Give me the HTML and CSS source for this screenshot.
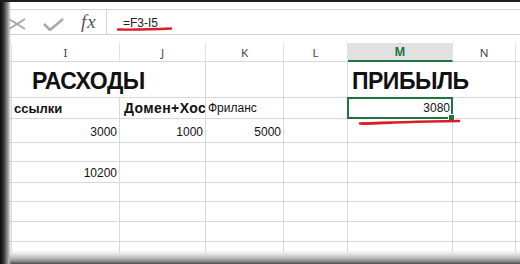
FILE: index.html
```html
<!DOCTYPE html>
<html lang="ru">
<head>
    <meta charset="UTF-8">
    <title>Прибыль</title>
    <link rel="stylesheet" href="styles.css">
</head>
<body>
<div class="screen">
    <div class="formula-bar">
        <div class="fb-icons">
            <svg class="ico-x" width="18" height="12" viewBox="0 0 18 12">
                <path d="M1 1 L17 11 M17 1 L1 11" stroke="#a3a3a3" stroke-width="1.6" fill="none"/>
            </svg>
            <svg class="ico-ok" width="21" height="13" viewBox="0 0 21 13">
                <path d="M1 6 L7 12 L20 1" stroke="#a8a8a8" stroke-width="2.6" fill="none"/>
            </svg>
            <span class="fx">fx</span>
        </div>
        <div class="fb-input">=F3-I5</div>
    </div>

    <div class="sheet">
        <div class="row head">
            <div class="cell"></div>
            <div class="cell">I</div>
            <div class="cell">J</div>
            <div class="cell">K</div>
            <div class="cell">L</div>
            <div class="cell sel-col">M</div>
            <div class="cell">N</div>
            <div class="cell"></div>
        </div>
        <div class="row r1">
            <div class="cell"></div>
            <div class="cell big span2 indent">РАСХОДЫ</div>
            <div class="cell"></div>
            <div class="cell"></div>
            <div class="cell big span2">ПРИБЫЛЬ</div>
            <div class="cell"></div>
        </div>
        <div class="row r2">
            <div class="cell"></div>
            <div class="cell bold">ссылки</div>
            <div class="cell bold wide">Домен+Хостинг</div>
            <div class="cell">Фриланс</div>
            <div class="cell"></div>
            <div class="cell num active">3080</div>
            <div class="cell"></div>
            <div class="cell"></div>
        </div>
        <div class="row r3">
            <div class="cell num">500</div>
            <div class="cell num">3000</div>
            <div class="cell num">1000</div>
            <div class="cell num">5000</div>
            <div class="cell"></div>
            <div class="cell"></div>
            <div class="cell"></div>
            <div class="cell"></div>
        </div>
        <div class="row r4">
            <div class="cell"></div><div class="cell"></div><div class="cell"></div><div class="cell"></div>
            <div class="cell"></div><div class="cell"></div><div class="cell"></div><div class="cell"></div>
        </div>
        <div class="row r5">
            <div class="cell num">4</div>
            <div class="cell num">10200</div>
            <div class="cell"></div><div class="cell"></div><div class="cell"></div>
            <div class="cell"></div><div class="cell"></div><div class="cell"></div>
        </div>
        <div class="row r6">
            <div class="cell"></div><div class="cell"></div><div class="cell"></div><div class="cell"></div>
            <div class="cell"></div><div class="cell"></div><div class="cell"></div><div class="cell"></div>
        </div>
        <div class="row r7">
            <div class="cell"></div><div class="cell"></div><div class="cell"></div><div class="cell"></div>
            <div class="cell"></div><div class="cell"></div><div class="cell"></div><div class="cell"></div>
        </div>
        <div class="row r8">
            <div class="cell"></div><div class="cell"></div><div class="cell"></div><div class="cell"></div>
            <div class="cell"></div><div class="cell"></div><div class="cell"></div><div class="cell"></div>
        </div>
        <div class="row r9">
            <div class="cell"></div><div class="cell"></div><div class="cell"></div><div class="cell"></div>
            <div class="cell"></div><div class="cell"></div><div class="cell"></div><div class="cell"></div>
        </div>
    </div>

    <!-- красные пометки поверх скриншота -->
    <svg class="marks" width="520" height="264" viewBox="0 0 520 264">
        <path d="M118 29.5 Q140 30 171 28.5" stroke="#d81e26" stroke-width="2.4" fill="none" stroke-linecap="round"/>
        <path d="M360 123.5 Q400 122 459 121" stroke="#d81e26" stroke-width="2.6" fill="none" stroke-linecap="round"/>
        <path d="M362 124 L392 123" stroke="#d81e26" stroke-width="2" fill="none" stroke-linecap="round"/>
    </svg>
</div>
</body>
</html>
```

FILE: styles.css
```css
body {
    margin: 0;
    background: #fff;
    font-family: "Liberation Sans", Arial, sans-serif;
}
.screen {
    position: relative;
    width: 520px;
    height: 264px;
    overflow: hidden;
    background: #fff;
    border-top: 2px solid #1e1e1e;
    box-sizing: border-box;
}
.screen::after {
    content: "";
    position: absolute;
    inset: 0;
    pointer-events: none;
    background:
        linear-gradient(to right, #0c0c0c 0, #2a2a2a 3px, #6a6a6a 6px, #b8b8b8 9px, rgba(255,255,255,0) 11px) left top / 11px 100% no-repeat,
        linear-gradient(to bottom, rgba(255,255,255,0) 0, #e4e4e4 4px, #b0b0b0 9px, #7a7a7a 12px, #4a4a4a 14px) left bottom / 100% 14px no-repeat;
}

/* строка формул */
.formula-bar {
    display: flex;
    margin-top: 7px;
    height: 24px;
    border-top: 1px solid #d6d6d6;
    border-bottom: 1px solid #d0d0d0;
}
.fb-icons {
    width: 107px;
    display: flex;
    align-items: center;
    border-right: 1px solid #d6d6d6;
    padding-left: 8px;
    box-sizing: border-box;
}
.ico-x {
    margin-top: 4px;
}
.ico-ok {
    margin-left: 17px;
    margin-top: 4px;
}
.fx {
    margin-left: 17px;
    font-family: "Liberation Serif", serif;
    font-style: italic;
    font-size: 19px;
    color: #555;
    letter-spacing: 1px;
}
.fb-input {
    padding-left: 16px;
    padding-top: 6px;
    font-size: 12px;
    color: #222;
}

/* лист */
.sheet {
    margin-top: 8px;
}
.row {
    display: grid;
    grid-template-columns: 12px 108px 86px 78px 64px 105px 63px 4px;
}
.cell {
    border-right: 1px solid #d9d9d9;
    border-bottom: 1px solid #d9d9d9;
    box-sizing: border-box;
    font-size: 12px;
    color: #111;
    white-space: nowrap;
    overflow: hidden;
    display: flex;
    align-items: flex-end;
    padding: 0 2px 3px 2px;
}
.row .cell:last-child {
    border-right: none;
    padding: 0;
}
.span2 {
    grid-column: span 2;
}
.num {
    justify-content: flex-end;
}
.bold {
    font-weight: bold;
    font-size: 13px;
    padding-bottom: 2px;
}
.wide {
    font-size: 14px;
    letter-spacing: 0.4px;
    padding-left: 4px;
}
.big {
    font-weight: bold;
    font-size: 23px;
    letter-spacing: -0.5px;
    padding-left: 4px;
    padding-bottom: 2px;
    overflow: visible;
}
.indent {
    padding-left: 20px;
}
.head {
    height: 19px;
}
.head .cell {
    justify-content: center;
    align-items: center;
    padding: 0;
    font-family: "Noto Sans", sans-serif;
    font-size: 11.5px;
    color: #444;
    border-right-color: #e2e2e2;
}
.head .sel-col {
    background: #e1e1e1;
    color: #217346;
    font-weight: bold;
    border-bottom: 2px solid #217346;
}
.r1 { height: 36px; }
.r2 { height: 21px; }
.r3 { height: 24px; }
.r4 { height: 19px; }
.r5 { height: 21px; }
.r5 .cell { padding-bottom: 2px; }
.r6 { height: 19px; }
.r7 { height: 20px; }
.r8 { height: 20px; }
.r9 { height: 30px; }

.active {
    position: relative;
    overflow: visible;
}
.active::before {
    content: "";
    position: absolute;
    left: -1px;
    top: -1px;
    right: -1px;
    bottom: -1px;
    border: 2px solid #217346;
}
.active::after {
    content: "";
    position: absolute;
    right: -3px;
    bottom: -3px;
    width: 5px;
    height: 5px;
    background: #217346;
    border: 1px solid #fff;
}

.marks {
    position: absolute;
    left: 0;
    top: -2px;
    pointer-events: none;
}
```
